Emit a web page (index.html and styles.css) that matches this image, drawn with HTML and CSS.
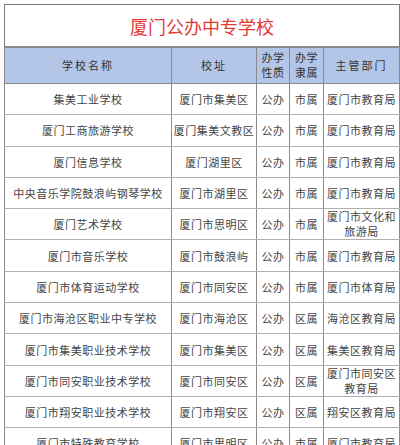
FILE: index.html
```html
<!DOCTYPE html>
<html lang="zh">
<head>
<meta charset="utf-8">
<link rel="stylesheet" href="styles.css">
</head>
<body>
<table class="schools">
  <colgroup>
    <col class="c-name"><col class="c-addr"><col class="c-type"><col class="c-own"><col class="c-dept">
  </colgroup>
  <tr class="title-row"><td colspan="5" class="title">厦门公办中专学校</td></tr>
  <tr class="head">
    <th class="wide">学校名称</th><th class="wide">校址</th><th>办学<br>性质</th><th>办学<br>隶属</th><th class="wide">主管部门</th>
  </tr>
  <tr><td>集美工业学校</td><td>厦门市集美区</td><td>公办</td><td>市属</td><td>厦门市教育局</td></tr>
  <tr><td>厦门工商旅游学校</td><td>厦门集美文教区</td><td>公办</td><td>市属</td><td>厦门市教育局</td></tr>
  <tr><td>厦门信息学校</td><td>厦门湖里区</td><td>公办</td><td>市属</td><td>厦门市教育局</td></tr>
  <tr><td>中央音乐学院鼓浪屿钢琴学校</td><td>厦门市湖里区</td><td>公办</td><td>市属</td><td>厦门市教育局</td></tr>
  <tr><td>厦门艺术学校</td><td>厦门市思明区</td><td>公办</td><td>市属</td><td class="two"><span class="ln">厦门市文化和</span><span class="ln">旅游局</span></td></tr>
  <tr><td>厦门市音乐学校</td><td>厦门市鼓浪屿</td><td>公办</td><td>市属</td><td>厦门市教育局</td></tr>
  <tr><td>厦门市体育运动学校</td><td>厦门市同安区</td><td>公办</td><td>市属</td><td>厦门市体育局</td></tr>
  <tr><td>厦门市海沧区职业中专学校</td><td>厦门市海沧区</td><td>公办</td><td>区属</td><td>海沧区教育局</td></tr>
  <tr><td>厦门市集美职业技术学校</td><td>厦门市集美区</td><td>公办</td><td>区属</td><td>集美区教育局</td></tr>
  <tr><td>厦门市同安职业技术学校</td><td>厦门市同安区</td><td>公办</td><td>区属</td><td class="two"><span class="ln">厦门市同安区</span><span class="ln">教育局</span></td></tr>
  <tr><td>厦门市翔安职业技术学校</td><td>厦门市翔安区</td><td>公办</td><td>区属</td><td>翔安区教育局</td></tr>
  <tr><td>厦门市特殊教育学校</td><td>厦门市思明区</td><td>公办</td><td>市属</td><td>厦门市教育局</td></tr>
</table>
</body>
</html>
```

FILE: styles.css
```css
html, body {
  margin: 0;
  padding: 0;
  background: #ffffff;
}
body {
  padding: 4px 0 0 4px;
  overflow: hidden;
  height: 445px;
  box-sizing: border-box;
}
.schools {
  border-collapse: collapse;
  table-layout: fixed;
  width: 395px;
  font-family: "Noto Sans CJK SC", "Noto Sans", sans-serif;
  font-size: 11px;
  color: #444444;
}
.c-name { width: 167px; }
.c-addr { width: 85px; }
.c-type { width: 33px; }
.c-own { width: 34px; }
.c-dept { width: 76px; }
.schools td, .schools th {
  border: 1px solid #8a8a8a;
  text-align: center;
  vertical-align: middle;
  padding: 0;
  font-weight: 400;
  letter-spacing: 0.5px;
  white-space: nowrap;
  overflow: hidden;
}
.schools tr { height: 31.3px; }
.schools td { border-top-color: #b0b0b0; border-bottom-color: #b0b0b0; }
.schools tr.title-row { height: 42px; }
.schools td.title {
  font-size: 18px;
  letter-spacing: 0;
  color: #e33a36;
  border-color: #7a7a7a;
  border-bottom: 2px solid #8a8a8a;
  padding-top: 2px;
}
.schools tr.head { height: 37px; }
.head th {
  background: #b4c6e7;
  line-height: 15px;
  color: #333;
}
.head th.wide { letter-spacing: 2px; }
.schools td.two { line-height: 15px; }
.two .ln { display: block; height: 15px; line-height: 15px; }
```
